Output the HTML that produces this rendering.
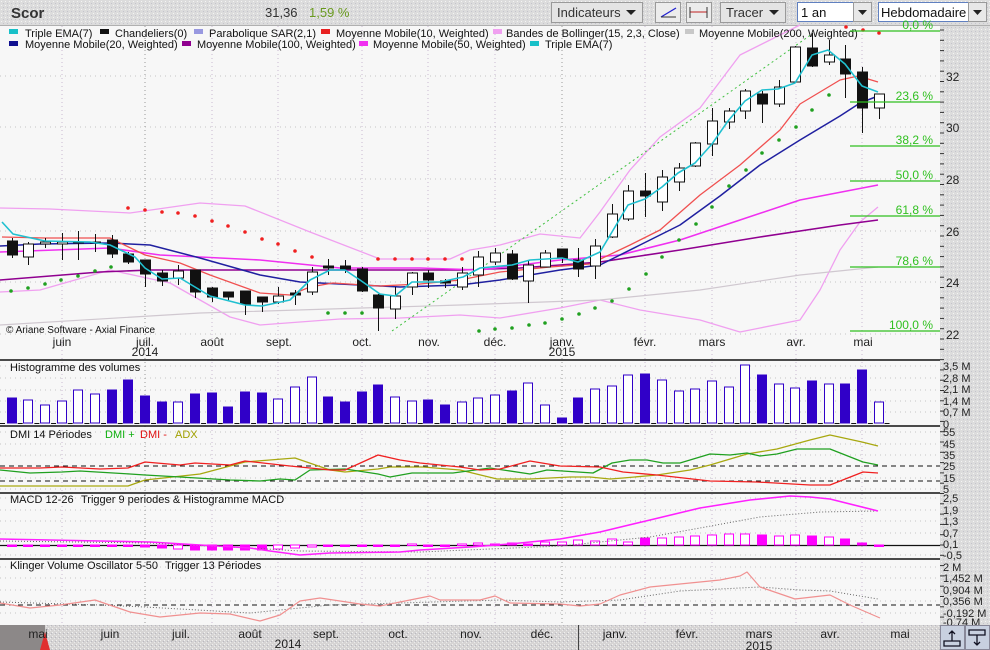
<!DOCTYPE html>
<html><head><meta charset="utf-8"><style>
html,body{margin:0;padding:0;width:990px;height:650px;overflow:hidden;background:#f7f7f7;font-family:"Liberation Sans",sans-serif}
svg{display:block}
text{font-family:"Liberation Sans",sans-serif}
</style></head><body>
<svg id="s" width="990" height="650" xmlns="http://www.w3.org/2000/svg">
<defs>
<pattern id="tex" width="4" height="4" patternUnits="userSpaceOnUse">
<rect width="4" height="4" fill="#d6d4d4"/><rect x="0" y="0" width="1" height="1" fill="#f0f0f0"/><rect x="2" y="2" width="1" height="1" fill="#eaeaea"/><rect x="3" y="1" width="1" height="1" fill="#b8b8c0"/>
</pattern>
<pattern id="tex2" width="4" height="4" patternUnits="userSpaceOnUse">
<rect width="4" height="4" fill="#dcdcdc"/><rect x="1" y="1" width="1" height="1" fill="#f4f4f4"/><rect x="3" y="3" width="1" height="1" fill="#c4c4cc"/>
</pattern>
</defs>
<rect x="0" y="0" width="990" height="650" fill="#f7f7f7"/>
<rect x="0" y="0" width="990" height="25" fill="url(#tex2)"/>
<line x1="0" y1="25.5" x2="990" y2="25.5" stroke="#b0b0b0"/>
<text x="11" y="18" font-size="15" font-weight="bold" fill="#333">Scor</text>
<text x="265" y="17" font-size="13" fill="#333">31,36</text>
<text x="309" y="17" font-size="13" fill="#6a9a20">1,59 %</text>
<rect x="551.5" y="2.5" width="91" height="20" fill="#e4e4e4" stroke="#9a9a9a"/>
<text x="557" y="17" font-size="13" fill="#333">Indicateurs</text>
<path d="M626 10h10l-5 5z" fill="#222"/>
<rect x="655.5" y="2.5" width="25" height="20" fill="#ececec" stroke="#9a9a9a"/>
<line x1="661" y1="17" x2="676" y2="8" stroke="#2020d0" stroke-width="1.3"/>
<line x1="661" y1="17" x2="676" y2="17" stroke="#333"/>
<rect x="686.5" y="2.5" width="25" height="20" fill="#ececec" stroke="#9a9a9a"/>
<line x1="690" y1="12" x2="707" y2="12" stroke="#c02020"/>
<line x1="690" y1="7" x2="690" y2="18" stroke="#333"/><line x1="707" y1="7" x2="707" y2="18" stroke="#333"/>
<rect x="720.5" y="2.5" width="65" height="20" fill="#e4e4e4" stroke="#9a9a9a"/>
<text x="726" y="17" font-size="13" fill="#333">Tracer</text>
<path d="M769 10h10l-5 5z" fill="#222"/>
<rect x="797.5" y="2.5" width="56" height="19" fill="#fff" stroke="#6080c0"/>
<text x="801" y="17" font-size="13" fill="#111">1 an</text>
<rect x="853.5" y="2.5" width="18" height="19" fill="#e8e8e8" stroke="#9a9a9a"/>
<path d="M858 10h9l-4.5 5z" fill="#222"/>
<rect x="878.5" y="2.5" width="90" height="19" fill="#fff" stroke="#6080c0"/>
<text x="881" y="17" font-size="13" fill="#111">Hebdomadaire</text>
<rect x="968.5" y="2.5" width="18" height="19" fill="#e8e8e8" stroke="#9a9a9a"/>
<path d="M973 10h9l-4.5 5z" fill="#222"/>

<rect x="940" y="26" width="50" height="599" fill="url(#tex2)"/>

<g id="grid"></g>
<g id="main"></g>

<g font-size="11" fill="#111">
<rect x="9" y="29" width="9" height="5" fill="#18c0c8"/><text x="25" y="37">Triple EMA(7)</text>
<rect x="100" y="29" width="9" height="5" fill="#111"/><text x="115" y="37">Chandeliers(0)</text>
<rect x="194" y="29" width="9" height="5" fill="#9898e0"/><text x="209" y="37">Parabolique SAR(2,1)</text>
<rect x="321" y="29" width="9" height="5" fill="#e82020"/><text x="336" y="37">Moyenne Mobile(10, Weighted)</text>
<rect x="493" y="29" width="9" height="5" fill="#f0a0f0"/><text x="506" y="37">Bandes de Bollinger(15, 2,3, Close)</text>
<rect x="685" y="29" width="9" height="5" fill="#c8c8c8"/><text x="699" y="37">Moyenne Mobile(200, Weighted)</text>
<rect x="9" y="41" width="9" height="5" fill="#101090"/><text x="25" y="48">Moyenne Mobile(20, Weighted)</text>
<rect x="182" y="41" width="9" height="5" fill="#900090"/><text x="197" y="48">Moyenne Mobile(100, Weighted)</text>
<rect x="359" y="41" width="9" height="5" fill="#f030f0"/><text x="373" y="48">Moyenne Mobile(50, Weighted)</text>
<rect x="530" y="41" width="9" height="5" fill="#18c0c8"/><text x="545" y="48">Triple EMA(7)</text>
</g>

<g stroke="#30c020" stroke-width="1.2">
<line x1="850" y1="31" x2="940" y2="31"/><line x1="850" y1="102" x2="940" y2="102"/><line x1="850" y1="146" x2="940" y2="146"/><line x1="850" y1="181" x2="940" y2="181"/><line x1="850" y1="216" x2="940" y2="216"/><line x1="850" y1="267" x2="940" y2="267"/><line x1="850" y1="331" x2="940" y2="331"/>
</g>
<g font-size="12" fill="#30c020" text-anchor="end">
<text x="933" y="29">0,0 %</text><text x="933" y="100">23,6 %</text><text x="933" y="144">38,2 %</text><text x="933" y="179">50,0 %</text><text x="933" y="214">61,8 %</text><text x="933" y="265">78,6 %</text><text x="933" y="329">100,0 %</text>
</g>
<text x="6" y="333" font-size="10" fill="#111">© Ariane Software - Axial Finance</text>
<g font-size="12" fill="#222" text-anchor="middle">
<text x="62" y="346">juin</text><text x="145" y="346">juil.</text><text x="145" y="356">2014</text><text x="212" y="346">août</text><text x="279" y="346">sept.</text><text x="362" y="346">oct.</text><text x="429" y="346">nov.</text><text x="495" y="346">déc.</text><text x="562" y="346">janv.</text><text x="562" y="356">2015</text><text x="645" y="346">févr.</text><text x="712" y="346">mars</text><text x="796" y="346">avr.</text><text x="863" y="346">mai</text>
</g>
<g font-size="12" fill="#222">
<text x="946" y="81">32</text><text x="946" y="132">30</text><text x="946" y="184">28</text><text x="946" y="236">26</text><text x="946" y="287">24</text><text x="946" y="339">22</text>
</g>
<g font-size="11" fill="#222">
<text x="943" y="370">3,5 M</text><text x="943" y="382">2,8 M</text><text x="943" y="393">2,1 M</text><text x="943" y="405">1,4 M</text><text x="943" y="416">0,7 M</text><text x="943" y="428">0</text>
<text x="943" y="436">55</text><text x="943" y="448">45</text><text x="943" y="459">35</text><text x="943" y="470">25</text><text x="943" y="482">15</text><text x="943" y="493">5</text>
<text x="943" y="502">2,5</text><text x="943" y="514">1,9</text><text x="943" y="525">1,3</text><text x="943" y="537">0,7</text><text x="943" y="548">0,1</text><text x="943" y="559">-0,5</text>
<text x="943" y="571">2 M</text><text x="943" y="582">1,452 M</text><text x="943" y="594">0,904 M</text><text x="943" y="605">0,356 M</text><text x="943" y="617">-0,192 M</text><text x="943" y="626">-0,74 M</text>
</g>
<g font-size="11" fill="#111">
<text x="10" y="371">Histogramme des volumes</text>
<text x="10" y="438">DMI 14 Périodes</text><text x="105" y="438" fill="#10b010">DMI +</text><text x="140" y="438" fill="#e01010">DMI -</text><text x="175" y="438" fill="#a0a000">ADX</text>
<text x="10" y="503">MACD 12-26</text><text x="81" y="503">Trigger 9 periodes &amp; Histogramme MACD</text>
<text x="10" y="569">Klinger Volume Oscillator 5-50</text><text x="165" y="569">Trigger 13 Périodes</text>
</g>
<g stroke="#111" stroke-width="1.5">
<line x1="0" y1="360" x2="940" y2="360"/><line x1="0" y1="426" x2="940" y2="426"/><line x1="0" y1="493" x2="940" y2="493"/><line x1="0" y1="559" x2="940" y2="559"/>
</g>
<rect x="0" y="625" width="940" height="25" fill="url(#tex)"/>
<rect x="0" y="625" width="45" height="25" fill="#8c8888"/>
<path d="M40 650l5-18 5 18z" fill="#e03030"/>
<line x1="578.5" y1="625" x2="578.5" y2="650" stroke="#444"/>
<g font-size="12" fill="#222" text-anchor="middle">
<text x="38" y="638">mai</text><text x="110" y="638">juin</text><text x="181" y="638">juil.</text><text x="250" y="638">août</text><text x="326" y="638">sept.</text><text x="398" y="638">oct.</text><text x="471" y="638">nov.</text><text x="542" y="638">déc.</text><text x="615" y="638">janv.</text><text x="687" y="638">févr.</text><text x="759" y="638">mars</text><text x="759" y="650">2015</text><text x="830" y="638">avr.</text><text x="900" y="638">mai</text><text x="288" y="648">2014</text>
</g>
<rect x="940.5" y="625.5" width="24" height="24" fill="#c8d0e0" stroke="#889"/>
<rect x="965.5" y="625.5" width="24" height="24" fill="#c8d0e0" stroke="#889"/>
<path d="M944 641h16v5h-16z M952 641v-10 M949 634l3-3 3 3" fill="none" stroke="#112" stroke-width="1.3"/>
<path d="M969 630h16v5h-16z M977 635v10 M974 642l3 3 3-3" fill="none" stroke="#112" stroke-width="1.3"/>
</svg>
<script>
const NS="http://www.w3.org/2000/svg",S=document.getElementById('s'),G=document.getElementById('grid'),M=document.getElementById('main');
function el(t,a,p){const e=document.createElementNS(NS,t);for(const k in a)e.setAttribute(k,a[k]);(p||M).appendChild(e);return e;}
function pl(pts,c,w,d){el('polyline',{points:pts.map(p=>p.join(',')).join(' '),fill:'none',stroke:c,'stroke-width':w||1.2,'stroke-dasharray':d||'none','stroke-linejoin':'round'});}
const X=i=>11.7+16.67*i;
[76,127,179,231,282,334,366,378,390,401,412,432,444,455,478,489,498,510,521,533,555,567,578,590,601,613].forEach(y=>el('line',{x1:0,y1:y,x2:940,y2:y,stroke:'#c4c4c4','stroke-dasharray':'1,4'},G));
[62,145,212,278,362,428,495,562,645,712,796,862].forEach(x=>el('line',{x1:x,y1:26,x2:x,y2:625,stroke:(x==145||x==562)?'#999':'#c8b8d0','stroke-dasharray':'1,3'},G));
for(let y=30;y<625;y+=10.3)el('line',{x1:940,y1:y,x2:944,y2:y,stroke:'#333'},G);
pl([[0,208],[50,209],[130,213],[200,203],[245,206],[310,232],[380,259],[450,259],[470,250],[500,245],[540,234],[580,238],[600,212],[630,170],[660,137],[700,108],[740,55],[780,35],[800,25]],'#f0a0f0',1.3);
pl([[0,292],[40,290],[110,270],[170,283],[230,317],[260,325],[340,319],[400,318],[460,315],[500,318],[560,308],[600,300],[640,310],[700,320],[740,332],[760,328],[800,320],[820,290],[840,250],[860,222],[878,207]],'#f0a0f0',1.3);
pl([[0,325],[200,313],[460,305],[600,300],[700,290],[800,275],[878,267]],'#d0c8d0',1.2);
pl([[392,331],[812,34]],'#40c040',1,'2,3');
pl([[0,280],[100,272],[150,270],[300,270],[460,270],[520,268],[600,262],[680,250],[760,237],[840,225],[878,220]],'#900090',1.6);
pl([[0,252],[110,248],[160,255],[260,260],[340,268],[420,268],[480,270],[560,260],[620,255],[680,240],[740,220],[800,200],[878,185]],'#f030f0',1.6);
pl([[0,246],[40,244],[110,243],[150,245],[200,258],[260,275],[300,282],[360,285],[400,287],[460,285],[500,280],[560,270],[600,265],[640,245],[680,225],[720,196],[760,165],[800,140],[840,116],[860,103],[878,96]],'#2020a0',1.5);
pl([[2,237],[45,238],[110,238],[145,255],[180,263],[210,275],[260,293],[290,295],[310,287],[333,283],[380,286],[420,284],[460,280],[500,272],[550,267],[590,264],[630,245],[660,230],[700,195],[740,165],[780,130],[800,104],[840,80],[858,76],[878,82]],'#f05050',1.3);
[[128,208],[145,210],[162,212],[178,213],[195,216],[212,221],[228,226],[245,232],[262,239],[278,244],[295,251],[312,257],[378,259],[395,259],[412,259],[428,259],[445,259],[462,259],[846,27],[863,30],[879,33]].forEach(p=>el('circle',{cx:p[0],cy:p[1],r:1.8,fill:'#f02020'}));
[[11,291],[28,288],[45,284],[61,280],[78,276],[95,271],[111,267],[328,313],[345,313],[362,313],[479,331],[495,329],[512,328],[529,325],[545,323],[562,319],[579,314],[595,308],[612,301],[629,289],[646,274],[662,257],[679,240],[696,224],[712,207],[729,186],[746,170],[762,153],[779,140],[796,127],[812,110],[829,95]].forEach(p=>el('circle',{cx:p[0],cy:p[1],r:1.8,fill:'#20a020'}));
const C=[[241,255,238,258,1],[244,257,242,265,0],[242,244,238,248,0],[242,244,233,260,0],[242,243,231,260,0],[242,243,234,252,0],[240,254,235,258,1],[254,262,252,264,1],[260,274,260,287,1],[273,281,270,286,1],[271,278,265,285,0],[270,292,270,298,1],[288,297,287,302,1],[292,297,292,300,1],[291,304,291,315,1],[297,302,297,312,1],[296,302,287,304,0],[293,295,290,305,1],[272,292,267,295,0],[266,268,259,275,1],[266,269,260,273,1],[269,291,267,292,1],[295,308,294,331,1],[296,309,287,319,0],[273,287,272,295,0],[273,280,270,288,1],[281,283,279,288,1],[273,287,267,290,0],[257,275,251,287,0],[253,262,248,265,0],[254,279,250,280,1],[265,281,260,303,0],[253,267,250,267,0],[249,258,249,263,1],[260,269,248,277,1],[246,266,239,279,0],[214,237,204,238,0],[191,219,185,221,0],[191,196,173,217,1],[177,202,170,211,0],[168,182,163,191,0],[143,166,142,167,0],[121,144,108,156,0],[111,122,108,129,0],[91,111,89,119,0],[94,104,91,123,1],[87,104,80,107,0],[47,82,46,83,0],[48,66,33,67,1],[55,62,40,65,0],[59,74,45,98,1],[72,108,67,133,1],[94,108,94,119,0]];
C.forEach((c,i)=>{const x=Math.round(X(i))+.5;el('line',{x1:x,y1:c[2],x2:x,y2:c[3],stroke:'#111'});el('rect',{x:x-5,y:c[0],width:10,height:Math.max(1,c[1]-c[0]),fill:c[4]?'#111':'#fff',stroke:'#111'});});
pl([[2,222],[13,234],[45,241],[90,242],[110,245],[135,257],[145,268],[162,279],[180,278],[210,296],[245,305],[262,306],[290,300],[310,280],[330,270],[345,270],[360,280],[380,294],[395,296],[412,282],[440,282],[463,277],[480,268],[512,265],[530,260],[562,258],[578,262],[600,252],[612,232],[628,205],[645,199],[662,187],[678,173],[695,163],[712,144],[728,121],[745,101],[762,90],[778,89],[795,83],[812,55],[828,50],[845,64],[862,86],[878,92]],'#20c0d0',1.6);
const V=[[398,1],[400,0],[405,0],[401,0],[390,0],[394,0],[390,1],[380,1],[396,1],[402,1],[402,0],[394,1],[393,1],[407,1],[392,1],[393,1],[399,0],[387,0],[377,0],[397,1],[402,1],[392,1],[385,1],[397,0],[401,0],[400,1],[405,1],[402,0],[398,0],[395,0],[391,1],[383,0],[405,0],[418,1],[398,1],[389,0],[386,0],[375,0],[374,1],[380,0],[391,0],[389,0],[381,0],[387,0],[365,0],[375,1],[384,0],[388,0],[381,1],[384,0],[384,1],[370,1],[402,0]];
for(let i=0;i<53;i++){el('line',{x1:X(i)+6,y1:423.5,x2:X(i)+11,y2:423.5,stroke:'#111'});}
el('line',{x1:0,y1:423.5,x2:5,y2:423.5,stroke:'#111'});
V.forEach((v,i)=>{const x=Math.round(X(i))+.5;el('rect',{x:x-5,y:v[0],width:9,height:423-v[0],fill:v[1]?'#3000c8':'#fff',stroke:'#3000c8'});});
el('line',{x1:0,y1:466,x2:940,y2:466,stroke:'#111','stroke-dasharray':'5,4'});
el('line',{x1:0,y1:481,x2:940,y2:481,stroke:'#111','stroke-dasharray':'5,4'});
pl([[0,486],[62,486],[128,486],[145,480],[200,474],[245,462],[295,458],[330,470],[345,472],[378,469],[390,467],[423,467],[460,470],[497,479],[530,479],[570,477],[590,477],[610,479],[623,478],[657,475],[690,470],[710,465],[747,454],[777,449],[810,440],[830,435],[862,442],[878,446]],'#a8a810',1.3);
pl([[0,470],[30,473],[62,472],[80,471],[130,474],[145,475],[180,477],[230,480],[260,481],[280,479],[295,480],[310,470],[345,469],[378,474],[390,477],[412,473],[453,473],[490,468],[530,474],[547,470],[593,473],[612,463],[630,460],[647,460],[663,463],[680,463],[710,454],[730,455],[747,453],[760,456],[777,454],[797,449],[830,449],[863,462],[878,465]],'#20a020',1.3);
pl([[0,468],[40,468],[62,467],[100,469],[128,468],[145,462],[180,465],[195,463],[230,465],[245,461],[290,466],[330,470],[345,470],[378,455],[400,460],[420,463],[440,465],[460,467],[480,470],[500,469],[530,461],[560,466],[600,467],[623,472],[657,475],[710,481],[757,482],[810,485],[830,485],[863,472],[878,473]],'#f02020',1.3);
el('line',{x1:0,y1:545.5,x2:940,y2:545.5,stroke:'#111','stroke-width':1.2});
const H=[546,546,546,546,546,546,546,546,547,548,549,550,550,550,550,550,549,548,547,546,546,546,546,546,544,545,546,544,543,544,543,544,542,542,540,541,539,542,538,538,537,536,535,534,534,535,536,535,536,537,539,543,545];
const HF=[1,1,1,1,1,1,1,1,1,1,0,1,1,1,1,1,0,0,0,1,1,1,1,1,0,1,1,0,0,0,1,1,0,0,0,0,0,0,1,0,0,0,0,0,0,1,0,0,1,0,1,1,1];
H.forEach((h,i)=>{const x=Math.round(X(i))+.5;const y=Math.min(h,545),hh=Math.max(1.5,Math.abs(h-545));el('rect',{x:x-5,y:y,width:9,height:hh,fill:HF[i]?'#ff00ff':'#fff',stroke:'#ff00ff'});});
pl([[0,541],[150,543],[250,548],[300,551],[420,552],[560,546],[650,537],[700,528],[760,517],[820,512],[878,511]],'#666',1,'1,2');
pl([[0,539],[100,541],[150,542],[200,545],[250,548],[270,551],[300,555],[330,553],[400,552],[420,550],[470,547],[510,544],[560,539],[600,532],[650,520],[700,508],[750,500],[790,496],[810,497],[830,499],[878,511]],'#ff20ff',1.6);
el('line',{x1:0,y1:605,x2:940,y2:605,stroke:'#111','stroke-dasharray':'5,4'});
pl([[0,602],[100,605],[145,607],[250,613],[330,605],[400,603],[500,600],[560,602],[620,600],[680,591],[760,587],[800,590],[830,591],[878,599]],'#666',1,'1,2');
pl([[0,603],[30,608],[60,605],[95,600],[130,612],[160,617],[200,613],[230,614],[260,621],[280,615],[300,601],[320,598],[360,604],[380,606],[400,602],[430,596],[440,600],[480,600],[495,596],[510,603],[560,604],[580,606],[600,604],[620,595],[650,587],[680,584],[720,580],[740,576],[747,572],[760,587],[795,599],[830,595],[850,605],[880,618]],'#f09090',1.2);
[75,145,218,290,362,435,505,578,650,722,795,868].forEach(x=>el('line',{x1:x,y1:625,x2:x,y2:629,stroke:'#555'}));
</script>
</body></html>
